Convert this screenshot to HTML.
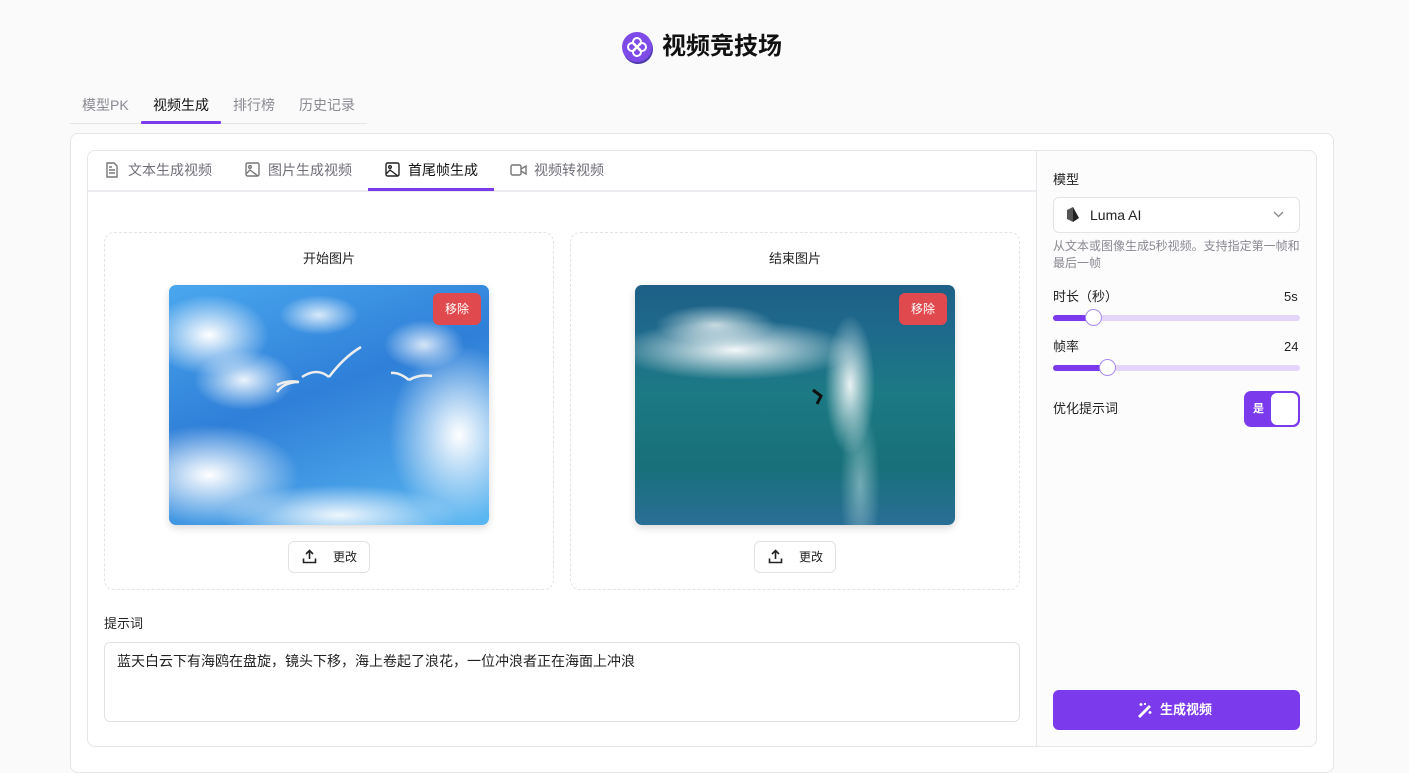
<!DOCTYPE html>
<html><head><meta charset="utf-8"><style>
*{box-sizing:border-box;margin:0;padding:0}
body{width:1409px;height:755px;overflow:hidden;background:#fafafa;font-family:"Liberation Sans","Noto Sans CJK SC",sans-serif;color:#222;position:relative}
.a{position:absolute}
.t{font-size:14px;line-height:20px;white-space:nowrap}
.g{color:#8a8a93}
.dash{border:1px dashed #e3e3e6;border-radius:10px}
.rm{background:#e04a4f;color:#fff;font-size:12px;border-radius:6px;width:48px;height:32px;line-height:32px;text-align:center}
.chg{width:82px;height:32px;border:1px solid #e2e2e6;border-radius:6px;background:#fff;font-size:12px}
.track{height:6px;border-radius:3px;background:#e4d6fb}
.thumb{width:17px;height:17px;border-radius:50%;background:#fff;border:1.5px solid #a98af0}
</style></head><body>
<svg class="a" style="left:621px;top:31px" width="34" height="34" viewBox="0 0 34 34"><circle cx="17" cy="18" r="15" fill="#4f3bb0"/><circle cx="16" cy="16" r="15" fill="#7e4ae8"/><g fill="none" stroke="#fff" stroke-width="2"><circle cx="16" cy="11" r="4"/><circle cx="16" cy="21" r="4"/><circle cx="11" cy="16" r="4"/><circle cx="21" cy="16" r="4"/></g></svg>
<div class="a" style="left:662px;top:32px;font-size:24px;font-weight:bold;color:#111;line-height:30px">视频竞技场</div>
<div class="a" style="left:70px;top:123px;width:297px;height:1px;background:#e5e5e8"></div>
<div class="a t g" style="left:82px;top:95px">模型PK</div>
<div class="a t" style="left:153px;top:95px;color:#111">视频生成</div>
<div class="a" style="left:141px;top:121px;width:80px;height:3px;background:#7c3aed;border-radius:1px"></div>
<div class="a t g" style="left:233px;top:95px">排行榜</div>
<div class="a t g" style="left:299px;top:95px">历史记录</div>
<div class="a" style="left:70px;top:133px;width:1264px;height:640px;background:#fff;border:1px solid #e6e6ea;border-radius:8px"></div>
<div class="a" style="left:87px;top:150px;width:1230px;height:597px;background:#fff;border:1px solid #e6e6ea;border-radius:8px"></div>
<div class="a" style="left:1036px;top:151px;width:280px;height:595px;background:#fcfcfc;border-left:1px solid #e8e8ec;border-radius:0 8px 8px 0"></div>
<div class="a" style="left:88px;top:190px;width:948px;height:2px;background:#ececf0"></div>
<svg class="a" style="left:105px;top:162px" width="14" height="16" viewBox="0 0 14 16" fill="none" stroke="#777" stroke-width="1.4"><path d="M2 1h7l3 3v11H2z M4 8h6 M4 11h6 M4 5h3"/></svg>
<div class="a t" style="left:128px;top:160px;color:#6f6f78">文本生成视频</div>
<svg class="a" style="left:245px;top:162px" width="15" height="15" viewBox="0 0 15 15" fill="none" stroke="#777" stroke-width="1.4"><rect x="1" y="1" width="13" height="13" rx="1.5"/><circle cx="5" cy="5" r="1.3"/><path d="M1 12l4-4 8 6"/></svg>
<div class="a t" style="left:268px;top:160px;color:#6f6f78">图片生成视频</div>
<svg class="a" style="left:385px;top:162px" width="15" height="15" viewBox="0 0 15 15" fill="none" stroke="#222" stroke-width="1.4"><rect x="1" y="1" width="13" height="13" rx="1.5"/><circle cx="5" cy="5" r="1.3"/><path d="M1 12l4-4 8 6"/></svg>
<div class="a t" style="left:408px;top:160px;color:#111">首尾帧生成</div>
<div class="a" style="left:368px;top:188px;width:126px;height:3px;background:#7c3aed"></div>
<svg class="a" style="left:510px;top:164px" width="17" height="12" viewBox="0 0 17 12" fill="none" stroke="#777" stroke-width="1.4"><rect x="1" y="1" width="10" height="10" rx="1.5"/><path d="M11 5l5-3v8l-5-3"/></svg>
<div class="a t" style="left:534px;top:160px;color:#6f6f78">视频转视频</div>
<div class="a dash" style="left:104px;top:232px;width:450px;height:358px"></div>
<div class="a dash" style="left:570px;top:232px;width:450px;height:358px"></div>
<div class="a t" style="left:104px;top:249px;width:450px;text-align:center;font-size:13px">开始图片</div>
<div class="a t" style="left:570px;top:249px;width:450px;text-align:center;font-size:13px">结束图片</div>
<div class="a" style="left:169px;top:285px;width:320px;height:240px;border-radius:7px;box-shadow:0 3px 8px rgba(0,0,0,.15);overflow:hidden;background:
radial-gradient(ellipse 60px 40px at 40px 50px,#fff,rgba(255,255,255,0)),
radial-gradient(ellipse 50px 30px at 75px 95px,rgba(255,255,255,.9),rgba(255,255,255,0)),
radial-gradient(ellipse 90px 50px at 40px 190px,#fff,rgba(255,255,255,0)),
radial-gradient(ellipse 70px 90px at 290px 150px,#fff,rgba(255,255,255,0)),
radial-gradient(ellipse 120px 30px at 170px 230px,rgba(255,255,255,.9),rgba(255,255,255,0)),
radial-gradient(ellipse 40px 20px at 150px 30px,rgba(255,255,255,.8),rgba(255,255,255,0)),
radial-gradient(ellipse 40px 25px at 255px 60px,rgba(255,255,255,.8),rgba(255,255,255,0)),
linear-gradient(160deg,#4aa7ee 0%,#2f7fd8 45%,#5ab8f2 100%)">
<svg width="320" height="240"><g fill="none" stroke="#eee" stroke-width="2.5"><path d="M160 92q15-20 32-30M160 92q-12-10-27 0"/><path d="M240 95q-10-8-18-7M240 95q10-6 23-4"/><path d="M108 100q10-5 22-3M130 97q-15 0-22 10"/></g></svg></div>
<div class="a rm" style="left:433px;top:293px">移除</div>
<div class="a" style="left:635px;top:285px;width:320px;height:240px;border-radius:7px;box-shadow:0 3px 8px rgba(0,0,0,.15);overflow:hidden;background:
radial-gradient(ellipse 120px 30px at 100px 65px,rgba(255,255,255,.95),rgba(255,255,255,0)),
radial-gradient(ellipse 25px 70px at 215px 100px,rgba(255,255,255,.9),rgba(255,255,255,0)),
radial-gradient(ellipse 60px 20px at 80px 40px,rgba(230,240,240,.8),rgba(255,255,255,0)),
radial-gradient(ellipse 20px 80px at 225px 200px,rgba(200,230,230,.5),rgba(255,255,255,0)),
linear-gradient(180deg,#1e5f86 0%,#1e6a8c 20%,#1c7a84 45%,#17707a 75%,#2a6f96 100%)">
<svg width="320" height="240"><path d="M178 105l8 6-4 8" stroke="#111" stroke-width="3" fill="none"/></svg></div>
<div class="a rm" style="left:899px;top:293px">移除</div>
<div class="a chg" style="left:288px;top:541px"></div>
<svg class="a" style="left:302px;top:549px" width="15" height="15" viewBox="0 0 15 15" fill="none" stroke="#222" stroke-width="1.6"><path d="M7.5 10V1.5M4 5l3.5-3.5L11 5M1.5 9.5v4h12v-4"/></svg>
<div class="a t" style="left:333px;top:547px;font-size:12px">更改</div>
<div class="a chg" style="left:754px;top:541px"></div>
<svg class="a" style="left:768px;top:549px" width="15" height="15" viewBox="0 0 15 15" fill="none" stroke="#222" stroke-width="1.6"><path d="M7.5 10V1.5M4 5l3.5-3.5L11 5M1.5 9.5v4h12v-4"/></svg>
<div class="a t" style="left:799px;top:547px;font-size:12px">更改</div>
<div class="a t" style="left:104px;top:614px;font-size:13px">提示词</div>
<div class="a" style="left:104px;top:642px;width:916px;height:80px;border:1px solid #e2e2e6;border-radius:6px"></div>
<div class="a t" style="left:117px;top:651px;font-size:14px">蓝天白云下有海鸥在盘旋，镜头下移，海上卷起了浪花，一位冲浪者正在海面上冲浪</div>
<div class="a t" style="left:1053px;top:170px;font-size:13px">模型</div>
<div class="a" style="left:1053px;top:197px;width:247px;height:36px;background:#fff;border:1px solid #e4e4e8;border-radius:6px"></div>
<svg class="a" style="left:1066px;top:207px" width="14" height="15" viewBox="0 0 14 15"><path d="M1 3l6-3v15l-6-3z" fill="#555"/><path d="M7 0l6 11-6 4z" fill="#222"/></svg>
<div class="a t" style="left:1090px;top:205px">Luma AI</div>
<svg class="a" style="left:1273px;top:211px" width="11" height="7" viewBox="0 0 11 7" fill="none" stroke="#888" stroke-width="1.3"><path d="M1 1l4.5 4.5L10 1"/></svg>
<div class="a" style="left:1053px;top:238px;width:250px;font-size:12px;line-height:17px;color:#8a8a93">从文本或图像生成5秒视频。支持指定第一帧和<br>最后一帧</div>
<div class="a t" style="left:1053px;top:287px;font-size:13px">时长（秒）</div>
<div class="a t" style="left:1284px;top:287px;font-size:13px">5s</div>
<div class="a track" style="left:1053px;top:315px;width:247px"></div>
<div class="a" style="left:1053px;top:315px;width:40px;height:6px;border-radius:3px;background:#7c3aed"></div>
<div class="a thumb" style="left:1085px;top:309px"></div>
<div class="a t" style="left:1053px;top:337px;font-size:13px">帧率</div>
<div class="a t" style="left:1284px;top:337px;font-size:13px">24</div>
<div class="a track" style="left:1053px;top:365px;width:247px"></div>
<div class="a" style="left:1053px;top:365px;width:54px;height:6px;border-radius:3px;background:#7c3aed"></div>
<div class="a thumb" style="left:1099px;top:359px"></div>
<div class="a t" style="left:1053px;top:399px;font-size:13px">优化提示词</div>
<div class="a" style="left:1244px;top:391px;width:56px;height:36px;border-radius:7px;background:#7c3aed"></div>
<div class="a" style="left:1271px;top:393px;width:27px;height:32px;border-radius:6px;background:#fff"></div>
<div class="a" style="left:1253px;top:401px;font-size:11px;color:#fff;font-weight:bold;line-height:16px">是</div>
<div class="a" style="left:1053px;top:690px;width:247px;height:40px;border-radius:6px;background:#7c3aed"></div>
<svg class="a" style="left:1137px;top:702px" width="16" height="16" viewBox="0 0 16 16" fill="none" stroke="#fff" stroke-width="1.4"><path d="M2 14L12 4l1 1L3 15z M9 7l1 1 M4 1v3M2.5 2.5h3 M13 9v3M11.5 10.5h3 M8 1v2M7 2h2"/></svg>
<div class="a t" style="left:1160px;top:700px;color:#fff;font-size:13px;font-weight:bold">生成视频</div>
</body></html>
